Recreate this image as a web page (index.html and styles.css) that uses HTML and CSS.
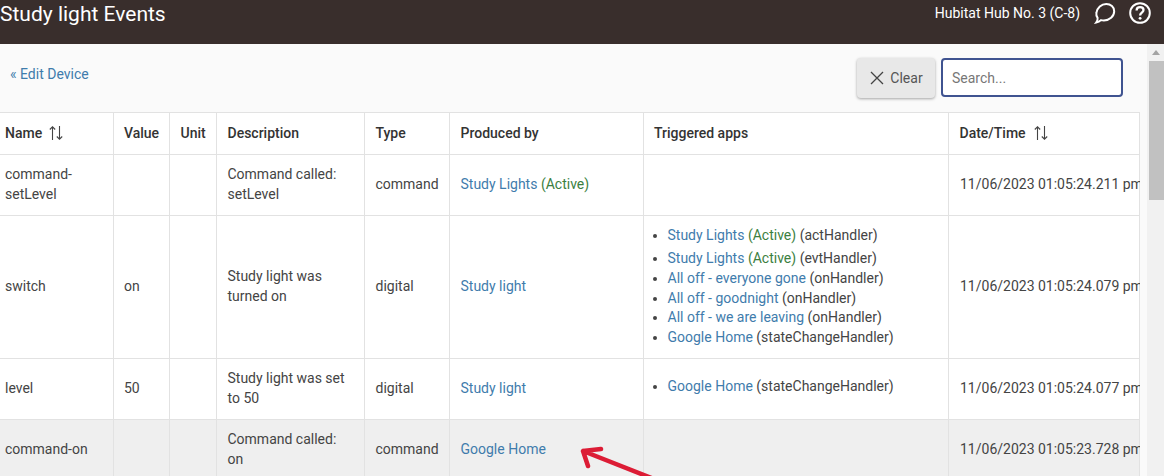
FILE: index.html
```html
<!DOCTYPE html>
<html lang="en">
<head>
<meta charset="utf-8">
<title>Study light Events</title>
<link rel="stylesheet" href="styles.css">
</head>
<body>
<header class="topbar">
  <h1 class="title">Study light Events</h1>
  <div class="hub">
    <span class="hub-name">Hubitat Hub No. 3 (C-8)</span>
    <svg class="icon-chat" viewBox="0 0 24 24" width="24" height="24" fill="none" stroke="#fff" stroke-width="2"><path d="M3.2 21.5c1.2-1.6 1.6-3.2 1.4-4.6C3.6 15.5 3 13.8 3.4 11.800C4.200 7 8.300 3 13.300 3c4.500 0 7.900 3 7.900 7.200 0 5.300-4.800 9.300-10.300 9.300-1.100 0-2-.1-2.900-.4-1.400 1.400-3.100 2.100-4.800 2.400z"/></svg>
    <svg class="icon-help" viewBox="0 0 24 24" width="24" height="24" fill="none" stroke="#fff" stroke-width="2"><circle cx="12" cy="12" r="9.800"/><path d="M8.600 9.400c0-2 1.500-3.300 3.500-3.300s3.400 1.200 3.400 3c0 2.600-3.400 2.600-3.400 5.400" stroke-width="2.300"/><circle cx="12.100" cy="17.300" r="1.400" fill="#fff" stroke="none"/></svg>
  </div>
</header>
<div class="page">
  <main class="content">
    <div class="toolbar">
      <a class="back" href="#">« Edit Device</a>
      <div class="search-group">
        <button class="clear" type="button">
          <svg viewBox="0 0 14 14" width="14" height="14" fill="none" stroke="#444" stroke-width="1.300"><path d="M1 1l12 12M13 1L1 13"/></svg>
          Clear
        </button>
        <input class="search" type="text" placeholder="Search...">
      </div>
    </div>
    <div class="table-wrap">
      <table class="events">
        <colgroup>
          <col class="c-name"><col class="c-value"><col class="c-unit"><col class="c-desc"><col class="c-type"><col class="c-prod"><col class="c-apps"><col class="c-date">
        </colgroup>
        <thead>
          <tr class="r-head">
            <th>Name<svg class="sort" viewBox="0 0 14 14" width="14" height="14" fill="none" stroke="#444" stroke-width="1.100"><path d="M3.500 14V.8M.8 3.500L3.500.8l2.700 2.700M10.500 0v13.200M7.800 10.500l2.700 2.700 2.700-2.700"/></svg></th>
            <th>Value</th>
            <th>Unit</th>
            <th>Description</th>
            <th>Type</th>
            <th>Produced by</th>
            <th>Triggered apps</th>
            <th>Date/Time<svg class="sort" viewBox="0 0 14 14" width="14" height="14" fill="none" stroke="#444" stroke-width="1.100"><path d="M3.500 14V.8M.8 3.500L3.500.8l2.700 2.700M10.500 0v13.200M7.800 10.500l2.700 2.700 2.700-2.700"/></svg></th>
          </tr>
        </thead>
        <tbody>
          <tr class="r1">
            <td>command-setLevel</td><td></td><td></td>
            <td>Command called: setLevel</td>
            <td>command</td>
            <td><a href="#">Study Lights</a> <span class="active">(Active)</span></td>
            <td></td>
            <td class="date">11/06/2023 01:05:24.211 pm</td>
          </tr>
          <tr class="r2">
            <td>switch</td><td>on</td><td></td>
            <td>Study light was turned on</td>
            <td>digital</td>
            <td><a href="#">Study light</a></td>
            <td>
              <ul class="apps apps-multi">
                <li class="first"><a href="#">Study Lights</a> <span class="active">(Active)</span> (actHandler)</li>
                <li><a href="#">Study Lights</a> <span class="active">(Active)</span> (evtHandler)</li>
                <li><a href="#">All off - everyone gone</a> (onHandler)</li>
                <li><a href="#">All off - goodnight</a> (onHandler)</li>
                <li><a href="#">All off - we are leaving</a> (onHandler)</li>
                <li><a href="#">Google Home</a> (stateChangeHandler)</li>
              </ul>
            </td>
            <td class="date">11/06/2023 01:05:24.079 pm</td>
          </tr>
          <tr class="r3">
            <td>level</td><td>50</td><td></td>
            <td>Study light was set to 50</td>
            <td>digital</td>
            <td><a href="#">Study light</a></td>
            <td><ul class="apps apps-single"><li><a href="#">Google Home</a> (stateChangeHandler)</li></ul></td>
            <td class="date">11/06/2023 01:05:24.077 pm</td>
          </tr>
          <tr class="r4 shaded">
            <td>command-on</td><td></td><td></td>
            <td>Command called: on</td>
            <td>command</td>
            <td><a href="#">Google Home</a></td>
            <td></td>
            <td class="date">11/06/2023 01:05:23.728 pm</td>
          </tr>
        </tbody>
      </table>
      <svg class="arrow" viewBox="0 0 100 31" width="100" height="31" fill="none" stroke="#dc1c35" stroke-width="4.500" stroke-linecap="round" stroke-linejoin="round"><path d="M4 6L80 36M22 4L4 6L9 21"/></svg>
    </div>
  </main>
  <div class="scrollbar"><span class="sb-up"></span><span class="sb-thumb"></span></div>
</div>
</body>
</html>
```
FILE: styles.css
```css
* { box-sizing: border-box; }
html, body { margin: 0; padding: 0; height: 100%; overflow: hidden; }
body { font-family: Roboto, "Liberation Sans", sans-serif; font-size: 14px; color: #444; background: #fafafa; }
.topbar { height: 44px; background: #392e2c; color: #fff; display: flex; justify-content: space-between; align-items: flex-start; }
.title { margin: 0; font-size: 21px; font-weight: 400; line-height: 28px; color: #fff; }
.hub { display: flex; align-items: center; height: 26px; padding-right: 12px; }
.hub-name { font-size: 14px; margin-right: 13px; }
.icon-chat { margin-right: 11px; margin-top: -1px; }
.icon-help { margin-top: -1px; }
.page { display: flex; height: 432px; }
.content { width: 1147px; overflow: hidden; }
.toolbar { height: 68px; display: flex; justify-content: space-between; align-items: flex-start; padding: 14px 24px 0 10px; }
.back { color: #3f7cac; text-decoration: none; font-size: 14px; line-height: 33px; }
.search-group { display: flex; gap: 6px; }
.clear { width: 78px; height: 40px; border: 0; border-radius: 4px; padding: 0 0 0 1px; background: #e8e8e8; color: #555; font: 14px Roboto, sans-serif; display: flex; align-items: center; justify-content: center; gap: 6px; box-shadow: 0 1px 3px rgba(0,0,0,.35); }
.search { width: 182px; height: 39px; border: 2px solid #3f5390; border-radius: 4px; background: #fff; padding: 0 9px; font: 14px Roboto, sans-serif; outline: 0; }
.search::placeholder { color: #777; }
.table-wrap { position: relative; width: 1140px; height: 364px; overflow: hidden; }
.events { border-collapse: collapse; table-layout: fixed; width: 1139px; background: #fff; }
.c-name { width: 113px; } .c-value { width: 56px; } .c-unit { width: 47px; } .c-desc { width: 148px; }
.c-type { width: 85px; } .c-prod { width: 194px; } .c-apps { width: 305px; } .c-date { width: 191px; }
.events th, .events td { border: 1px solid #e2e2e2; padding: 0 11px 2px; vertical-align: middle; font-size: 14px; line-height: 20px; text-align: left; }
.events th:first-child, .events td:first-child { padding-left: 5px; border-left: 0; }
.events th:nth-child(2), .events td:nth-child(2), .events th:nth-child(7) { padding-left: 10.500px; }
.events th:first-child .sort { margin-left: 7px; }
.events th { font-weight: 500; color: #333; }
.events a { color: #3f7cac; text-decoration: none; }
.active { color: #3c7f3f; }
.r-head { height: 42px; } .r1 { height: 61px; } .r2 { height: 143px; } .r3 { height: 61px; } .r4 { height: 61px; }
.shaded td { background: #efefef; }
.events .date { white-space: nowrap; padding-left: 11.500px; }
.sort { margin-left: 8px; vertical-align: -2px; }
.apps { margin: 0; padding: 0 0 0 13px; line-height: 19.600px; }
.apps-multi { padding-top: 1.500px; }
.apps-single { margin-bottom: 2px; }
.apps li { padding: 0; }
.apps li.first { margin-bottom: 3.500px; }
.arrow { position: absolute; left: 579px; top: 333px; }
.scrollbar { width: 17px; background: #f1f1f1; position: relative; }
.sb-up { display: block; width: 0; margin: 6px auto 0; border-left: 4px solid transparent; border-right: 4px solid transparent; border-bottom: 5px solid #a3a3a3; }
.sb-thumb { display: block; width: 15px; height: 139px; margin: 6px 0 0 2px; background: #c1c1c1; }
```
